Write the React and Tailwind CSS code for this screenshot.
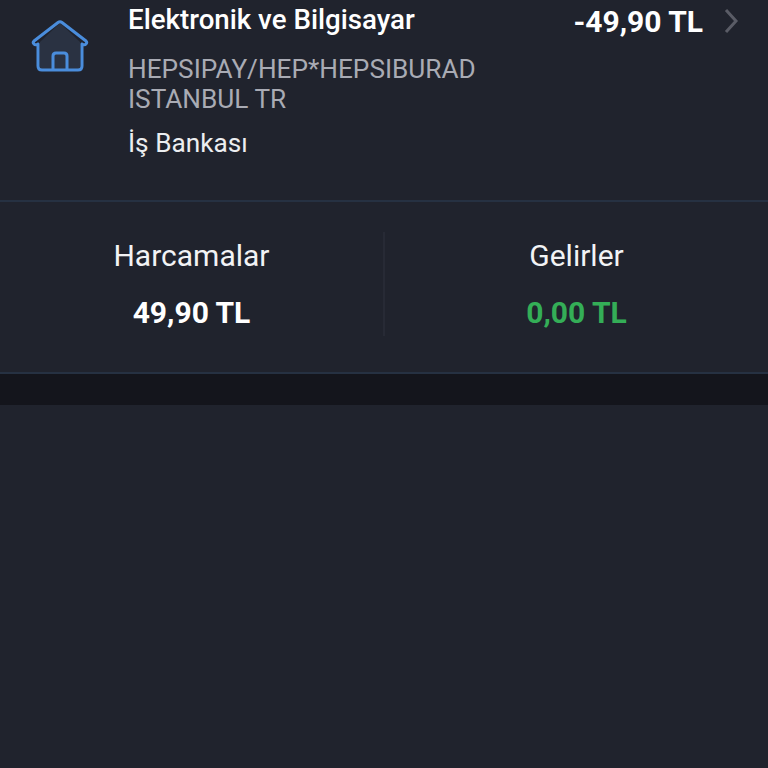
export default function App() {
  return (
    <div className="h-[768px] w-[768px] overflow-hidden bg-[#20232d] font-['Roboto',sans-serif]">
      {/* Transaction row */}
      <div className="flex h-[200px] items-start">
        <div className="w-[128px] shrink-0 pl-[31px] pt-[20px]">
          <svg width="58" height="52" viewBox="0 0 58 52" fill="none">
            <path d="M9 22 L29 3 L49 22 V47 Q49 50 46 50 H12 Q9 50 9 47 Z" fill="#2a3242" />
            <path
              d="M3 24 Q1.5 22.5 3 21 L27 2.5 Q29 1 31 2.5 L55 21 Q56.5 22.5 55 24 Q53.5 25.5 51 24 M3 24 Q4.500 25.500 7 24 M7 24 V46 Q7 50 11 50 H47 Q51 50 51 46 V24"
              stroke="#4a8ddc"
              strokeWidth="3"
              strokeLinecap="round"
              strokeLinejoin="round"
            />
            <path d="M22 50 V36 Q22 33 25 33 H33 Q36 33 36 36 V50" stroke="#4a8ddc" strokeWidth="3" />
          </svg>
        </div>
        <div className="flex-1 pt-[4px]">
          <div className="text-[27.7px] leading-[32px] font-medium text-white">Elektronik ve Bilgisayar</div>
          <div className="mt-[18px] text-[26.2px] leading-[30px] text-[#a9abb4]">
            HEPSIPAY/HEP*HEPSIBURAD
            <br />
            ISTANBUL TR
          </div>
          <div className="mt-[13px] text-[26.2px] leading-[32px] text-[#eceef0]">İş Bankası</div>
        </div>
        <div className="flex items-center pr-[29px] pt-[5px]">
          <span className="text-[30px] leading-[34px] font-bold text-white">-49,90 TL</span>
          <svg className="mb-[3px] ml-[20px]" width="16" height="26" viewBox="0 0 16 26" fill="none">
            <path d="M3 2 L13 13 L3 24" stroke="#5a5c66" strokeWidth="3" />
          </svg>
        </div>
      </div>

      {/* Totals */}
      <div className="flex h-[174px] items-center border-y-2 border-[#263142] pb-[7px]">
        <div className="flex h-[104px] w-[385px] flex-col items-center justify-center border-r-2 border-[#272a35] pt-[2px]">
          <div className="text-[30px] leading-[36px] text-[#f2f3f5]">Harcamalar</div>
          <div className="mt-[21px] text-[30px] leading-[36px] font-bold text-white">49,90 TL</div>
        </div>
        <div className="flex h-[104px] flex-1 flex-col items-center justify-center pt-[2px]">
          <div className="text-[30px] leading-[36px] text-[#f2f3f5]">Gelirler</div>
          <div className="mt-[21px] text-[30px] leading-[36px] font-bold text-[#34ae57]">0,00 TL</div>
        </div>
      </div>

      <div className="h-[31px] bg-[#14151c]" />
    </div>
  );
}
